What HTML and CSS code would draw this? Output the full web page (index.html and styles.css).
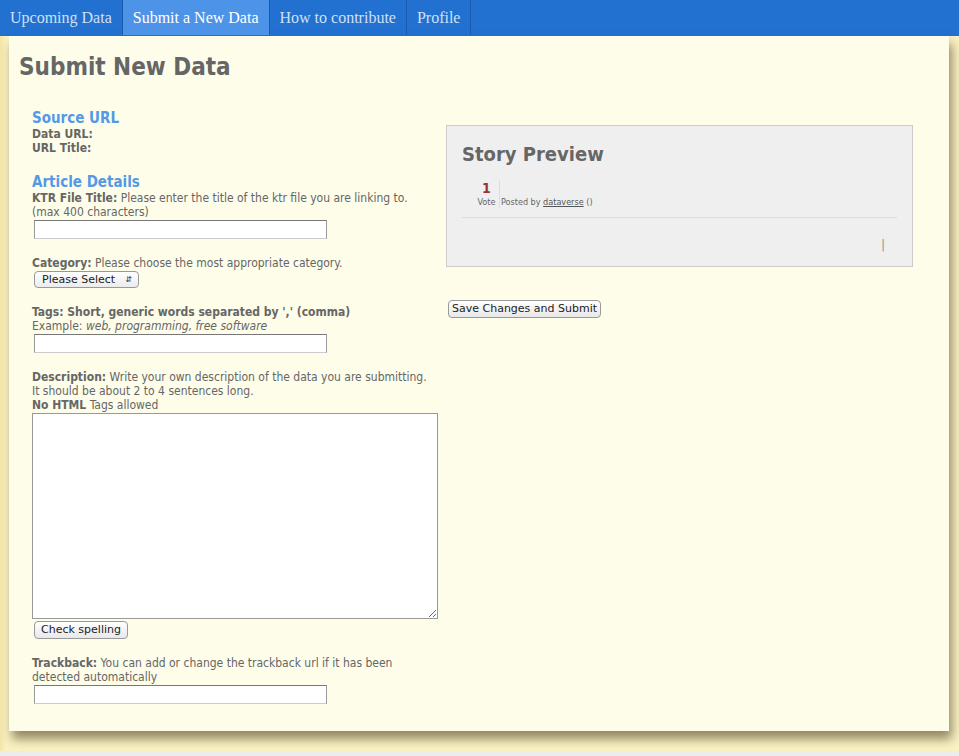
FILE: index.html
```html
<!DOCTYPE html>
<html>
<head>
<meta charset="utf-8">
<title>Submit New Data</title>
<link rel="stylesheet" href="styles.css">
</head>
<body>
<nav class="nav">
  <a class="tab">Upcoming Data</a>
  <a class="tab active">Submit a New Data</a>
  <a class="tab">How to contribute</a>
  <a class="tab">Profile</a>
</nav>
<div class="page">
  <div class="panel">
    <h1 class="title">Submit New Data</h1>
    <div class="cols">
      <div class="left">
        <h2 class="section">Source URL</h2>
        <div class="line"><b>Data URL:</b></div>
        <div class="line"><b>URL Title:</b></div>

        <h2 class="section sec2">Article Details</h2>
        <div class="field">
          <div class="line"><b>KTR File Title:</b> Please enter the title of the ktr file you are linking to.</div>
          <div class="line">(max 400 characters)</div>
          <input class="text" type="text">
        </div>
        <div class="field">
          <div class="line"><b>Category:</b> Please choose the most appropriate category.</div>
          <div class="select"><span>Please Select</span><span class="arrows">&#8693;</span></div>
        </div>
        <div class="field">
          <div class="line"><b>Tags: Short, generic words separated by ',' (comma)</b></div>
          <div class="line">Example: <i>web, programming, free software</i></div>
          <input class="text" type="text">
        </div>
        <div class="field">
          <div class="line"><b>Description:</b> Write your own description of the data you are submitting.</div>
          <div class="line">It should be about 2 to 4 sentences long.</div>
          <div class="line"><b>No HTML</b> Tags allowed</div>
          <textarea class="area"></textarea>
          <button class="btn spell">Check spelling</button>
        </div>
        <div class="field">
          <div class="line"><b>Trackback:</b> You can add or change the trackback url if it has been</div>
          <div class="line">detected automatically</div>
          <input class="text" type="text">
        </div>
      </div>
      <div class="right">
        <div class="preview">
          <h2 class="ptitle">Story Preview</h2>
          <div class="story">
            <div class="vote"><div class="num">1</div><div class="vlabel">Vote</div></div>
            <div class="posted">Posted by <a class="user">dataverse</a> ()</div>
          </div>
          <div class="pfoot"><span class="bar">|</span></div>
        </div>
        <button class="btn save">Save Changes and Submit</button>
      </div>
    </div>
  </div>
</div>
</body>
</html>
```

FILE: styles.css
```css
html { background: #ececec; }
body {
  margin: 0;
  font-family: "DejaVu Sans Condensed", "DejaVu Sans", Verdana, sans-serif;
  font-size: 12px;
  color: #666;
}
.nav {
  display: flex;
  height: 36px;
  background: #2270d0;
  border-bottom: 1px solid #3d6aa5;
  box-sizing: border-box;
}
.tab {
  font-family: "Liberation Serif", "Times New Roman", serif;
  font-size: 16px;
  color: #cfe0f6;
  padding: 0 10px;
  line-height: 35px;
  border-right: 1px solid #1a5bb0;
}
.tab.active {
  background: #4d94e8;
  color: #fff;
}
.page {
  background: linear-gradient(to right, #f3e5a6, #fbf2c4 6px);
  padding: 0 10px 20px 9px;
}
.panel {
  width: 940px;
  height: 695px;
  box-sizing: border-box;
  background: #fdfdea;
  box-shadow: 3px 8px 10px rgba(60, 50, 20, 0.55);
  padding: 16px 10px 0 10px;
}
.title {
  margin: 0;
  font-size: 24px;
  line-height: 30px;
  font-weight: bold;
  color: #666;
}
.cols {
  display: flex;
  margin-top: 27px;
  padding-left: 13px;
}
.left {
  width: 414px;
}
.section {
  margin: 0;
  font-size: 15px;
  line-height: 18px;
  color: #5599e6;
}
.sec2 { margin-top: 18px; }
.line {
  line-height: 14px;
}
.field { margin-bottom: 17px; }
.text {
  display: block;
  margin: 1px 0 0 2px;
  width: 293px;
  height: 19px;
  box-sizing: border-box;
  border: 1px solid #999;
  border-top-color: #777;
  border-bottom-color: #ccc;
  background: #fff;
  padding: 0;
}
.select {
  margin: 1px 0 1px 2px;
  width: 105px;
  height: 17px;
  box-sizing: border-box;
  border: 1px solid #999;
  border-radius: 4px;
  background: linear-gradient(#fff, #ececec);
  display: flex;
  justify-content: space-between;
  align-items: center;
  padding: 0 6px 0 7px;
  font-family: "DejaVu Sans", sans-serif;
  font-size: 11px;
  color: #222;
}
.arrows { font-size: 8px; color: #333; }
.area {
  display: block;
  margin: 1px 0 0 0;
  width: 406px;
  height: 206px;
  box-sizing: border-box;
  border: 1px solid #999;
  background: #fff;
  resize: both;
}
.btn {
  font-family: "DejaVu Sans", Verdana, sans-serif;
  font-size: 11px;
  color: #222;
  border: 1px solid #999;
  border-radius: 4px;
  background: linear-gradient(#fff, #e8e8e8);
  height: 18px;
  padding: 0 6px;
  line-height: 16px;
}
.spell {
  display: block;
  margin: 2px 0 0 2px;
  width: 94px;
}
.right {
  width: 467px;
  padding-top: 16px;
}
.preview {
  height: 142px;
  box-sizing: border-box;
  background: #efefef;
  border: 1px solid #ccc;
  padding: 16px 15px 0 15px;
}
.ptitle {
  margin: 0;
  font-size: 20px;
  line-height: 24px;
  color: #666;
}
.story {
  display: flex;
  margin-top: 14px;
  padding-left: 12px;
  border-bottom: 1px solid #ddd;
  padding-bottom: 9px;
}
.vote {
  width: 25px;
  text-align: center;
  border-right: 1px solid #ddd;
}
.num {
  color: #993333;
  font-weight: bold;
  font-size: 14px;
  line-height: 16px;
}
.vlabel {
  font-size: 9px;
  line-height: 12px;
  color: #666;
}
.posted {
  font-size: 9px;
  align-self: flex-end;
  line-height: 12px;
  padding-left: 1px;
}
.user { color: #555; text-decoration: underline; }
.pfoot {
  text-align: right;
  padding: 20px 12px 0 0;
  line-height: 14px;
  color: #888;
}
.save {
  margin-top: 33px;
  margin-left: 2px;
  padding: 0 3px;
}
```
